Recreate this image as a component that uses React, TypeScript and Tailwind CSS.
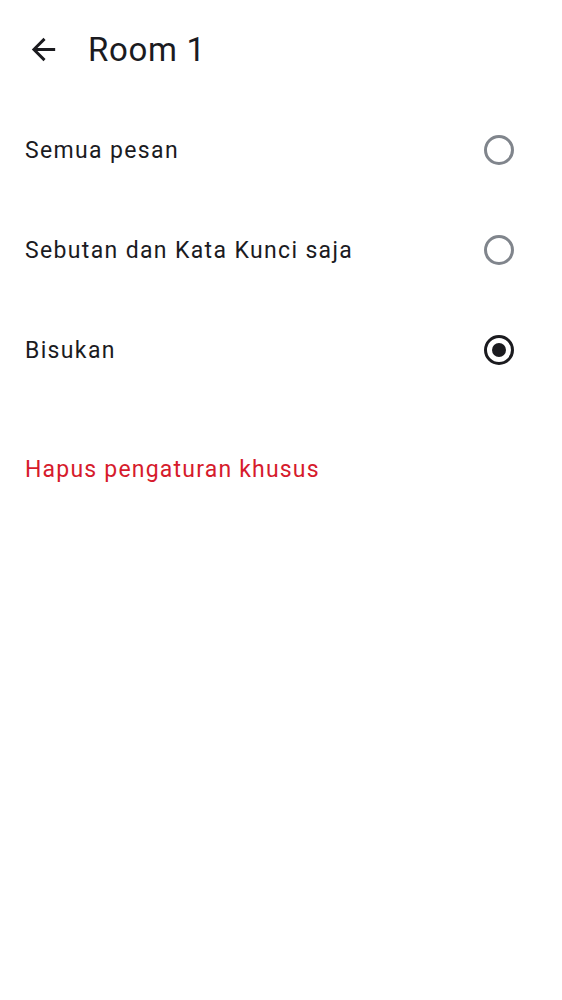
import React from "react";

function Radio({ checked }: { checked: boolean }) {
  return checked ? (
    <div className="w-[30px] h-[30px] rounded-full border-[3px] border-[#1b1b1f] flex items-center justify-center">
      <div className="w-[14px] h-[14px] rounded-full bg-[#1b1b1f]" />
    </div>
  ) : (
    <div className="w-[30px] h-[30px] rounded-full border-[3px] border-[#80858c]" />
  );
}

export default function App() {
  const items = [
    { label: "Semua pesan", checked: false },
    { label: "Sebutan dan Kata Kunci saja", checked: false },
    { label: "Bisukan", checked: true },
  ];
  return (
    <div className="w-[562px] h-[1000px] bg-white text-[#1b1b1f]" style={{ fontFamily: "Roboto, sans-serif" }}>
      <div className="h-[100px] flex items-center pl-[26px] pb-[2px]">
        <svg width="35" height="35" viewBox="0 0 24 24" className="shrink-0">
          <path d="M20 11H7.83l5.59-5.59L12 4l-8 8 8 8 1.41-1.41L7.83 13H20v-2z" fill="#1b1b1f" />
        </svg>
        <div className="ml-[27px] text-[33px] leading-none tracking-[0.7px]">Room 1</div>
      </div>
      <div className="flex flex-col">
        {items.map((it) => (
          <div key={it.label} className="h-[100px] flex items-center justify-between pl-[25px] pr-[48px]">
            <span className="text-[23px] tracking-[1.35px] mt-[2px]">{it.label}</span>
            <Radio checked={it.checked} />
          </div>
        ))}
      </div>
      <div className="mt-[53px] flex items-start pl-[25px]">
        <span className="text-[23px] tracking-[1.2px] text-[#d61b2c]">Hapus pengaturan khusus</span>
      </div>
    </div>
  );
}
